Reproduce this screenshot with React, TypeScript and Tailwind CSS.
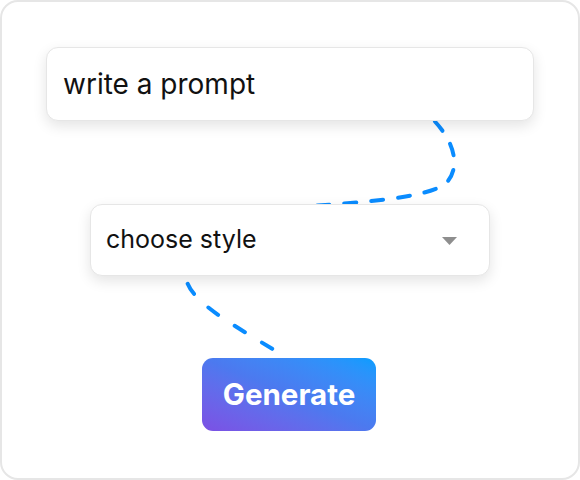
import React from "react";

export default function App() {
  return (
    <div className="w-[580px] h-[480px] bg-white" style={{ fontFamily: "Inter, 'Noto Sans', sans-serif" }}>
      <div className="relative w-[580px] h-[480px] border-2 border-[#e6e6e6] rounded-[18px] bg-white flex flex-col items-start pt-[45px]">
        <svg className="absolute inset-0" width="580" height="480" viewBox="0 0 580 480" fill="none">
          <path
            d="M 418 106 C 452 132, 462 166, 442 183 C 420 196, 360 201, 290 205"
            stroke="#0a8cff"
            strokeWidth="4"
            strokeLinecap="round"
            strokeDasharray="12 15"
            strokeDashoffset="-20"
          />
          <path
            d="M 184 276 C 188 300, 230 322, 282 354"
            stroke="#0a8cff"
            strokeWidth="4"
            strokeLinecap="round"
            strokeDasharray="12 20"
            strokeDashoffset="-6"
          />
        </svg>
        <div className="relative ml-[44px] w-[488px] h-[74px] bg-white border border-[#e6e6e6] rounded-[12px] shadow-[0_5px_14px_rgba(0,0,0,0.11)] flex items-center pl-[16px]">
          <span className="text-[28px] text-[#111]">write a prompt</span>
        </div>
        <div className="relative ml-[88px] mt-[83px] w-[400px] h-[72px] bg-white border border-[#e6e6e6] rounded-[12px] shadow-[0_5px_14px_rgba(0,0,0,0.11)] flex items-center pl-[15px] pr-[32px] justify-between">
          <span className="text-[25px] text-[#111]">choose style</span>
          <svg width="15" height="8" viewBox="0 0 15 8" className="mt-[2px]">
            <path d="M0 0 L15 0 L7.5 8 Z" fill="#8e8e8e" />
          </svg>
        </div>
        <div className="relative ml-[200px] mt-[82px] w-[174px] h-[73px] rounded-[11px] bg-linear-to-tr from-[#7b50e4] via-[#4c79ef] to-[#009dff] flex items-center justify-center">
          <span className="text-[29.5px] font-bold text-white">Generate</span>
        </div>
      </div>
    </div>
  );
}
